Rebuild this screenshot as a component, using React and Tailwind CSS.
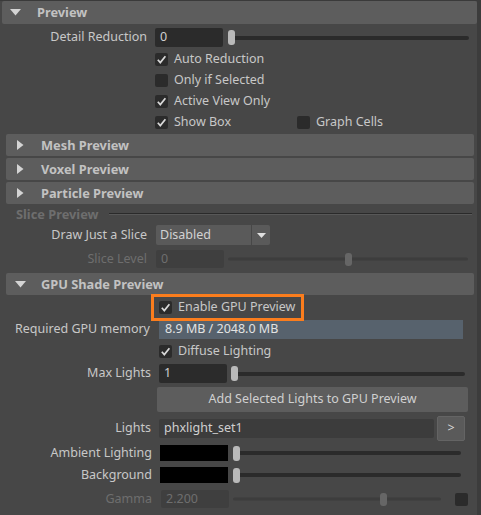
import React from "react";

const LABEL = "text-[#c8c8c8]";
const DIM = "text-[#6e6e6e]";

function Check({ checked }) {
  return (
    <div className="w-[13px] h-[13px] shrink-0 rounded-[2px] bg-[#2b2b2b] flex items-center justify-center">
      {checked && (
        <svg width="13" height="13" viewBox="0 0 13 13">
          <polyline points="2.8,6.8 5.3,9.6 10.4,3.2" fill="none" stroke="#d9d9d9" strokeWidth="1.7" />
        </svg>
      )}
    </div>
  );
}

function CheckRow({ checked, label, extra }) {
  return (
    <div className="h-[21px] flex items-center pl-[155px]">
      <div className="w-[142px] flex items-center gap-[6px]">
        <Check checked={checked} />
        <span className={LABEL}>{label}</span>
      </div>
      {extra}
    </div>
  );
}

function Header({ open, title, outer }) {
  return (
    <div
      className={
        "h-[22px] shrink-0 rounded-[2px] bg-[#5d5d5d] flex items-center " +
        (outer ? "ml-[2px] h-[23px] pl-[8px]" : "ml-[6px] mr-[3px] pl-[9px]")
      }
    >
      <div className="w-[20px] flex items-center">
        {open ? (
          <svg width="11" height="7" viewBox="0 0 11 7">
            <polygon points="0,0 11,0 5.5,6.5" fill="#d4d4d4" />
          </svg>
        ) : (
          <svg width="7" height="10" viewBox="0 0 7 10" className="ml-[2px]">
            <polygon points="0,0 6.5,5 0,10" fill="#d4d4d4" />
          </svg>
        )}
      </div>
      <span className={"font-bold text-[12.8px] text-[#c2c2c2] " + (outer ? "ml-[7px]" : "ml-[6px]")}>{title}</span>
    </div>
  );
}

function Slider({ width, pos, track = "#2b2b2b", handle = "#b9b9b9", h = 15, th = 4 }) {
  return (
    <div className="relative shrink-0" style={{ width, height: h }}>
      <div
        className="absolute left-0 right-0 top-1/2 -translate-y-1/2 rounded-full"
        style={{ height: th, background: track }}
      />
      <div
        className="absolute top-0 w-[7px] rounded-[3px]"
        style={{ left: pos, height: h, background: handle }}
      />
    </div>
  );
}

export default function App() {
  return (
    <div className="w-[481px] h-[515px] overflow-hidden bg-[#3c3c3c] flex text-[12.5px] leading-none font-['Noto_Sans',sans-serif]">
      <div className="w-[477px] shrink-0 bg-[#474747] flex flex-col border-t border-[#3a3a3a]">
        <Header open outer title="Preview" />

        {/* Detail Reduction */}
        <div className="mt-[4px] h-[19px] flex items-center">
          <div className={"w-[147px] text-right whitespace-nowrap " + LABEL}>Detail Reduction</div>
          <div className="ml-[8px] w-[68px] h-[19px] rounded-[2px] bg-[#2b2b2b] flex items-center pl-[5px] text-[#d0d0d0]">0</div>
          <div className="ml-[5px]">
            <Slider width={241} pos={0} />
          </div>
        </div>

        <div className="mt-[2px]">
          <CheckRow checked label="Auto Reduction" />
          <CheckRow label="Only if Selected" />
          <CheckRow checked label="Active View Only" />
          <CheckRow
            checked
            label="Show Box"
            extra={
              <div className="flex items-center gap-[6px]">
                <Check />
                <span className={LABEL}>Graph Cells</span>
              </div>
            }
          />
        </div>

        <div className="mt-[1px] flex flex-col gap-[2px]">
          <Header title="Mesh Preview" />
          <Header title="Voxel Preview" />
          <Header title="Particle Preview" />
        </div>

        {/* Slice Preview */}
        <div className="mt-[1px] h-[18px] flex items-center">
          <span className={"pl-[16px] font-bold text-[12.8px] " + DIM}>Slice Preview</span>
          <div className="ml-[10px] mr-[5px] flex-1 h-[2px] border-t border-[#2a2a2a] bg-[#585858]" />
        </div>

        <div className="mt-[2px] h-[20px] flex items-center">
          <div className={"w-[147px] text-right whitespace-nowrap " + LABEL}>Draw Just a Slice</div>
          <div className="ml-[9px] flex h-[20px]">
            <div className="w-[95px] rounded-l-[2px] bg-[#5a5a5a] flex items-center pl-[4px] text-[#d2d2d2]">Disabled</div>
            <div className="ml-[1px] w-[18px] rounded-r-[2px] bg-[#5a5a5a] flex items-center justify-center">
              <svg width="9" height="5" viewBox="0 0 9 5">
                <polygon points="0,0 9,0 4.5,5" fill="#e0e0e0" />
              </svg>
            </div>
          </div>
        </div>

        <div className="mt-[5px] h-[18px] flex items-center">
          <div className={"w-[147px] text-right " + DIM}>Slice Level</div>
          <div className={"ml-[9px] w-[68px] h-[18px] rounded-[2px] bg-[#3f3f3f] flex items-center pl-[5px] " + DIM}>0</div>
          <div className="ml-[4px]">
            <Slider width={240} pos={117} track="#3d3d3d" handle="#666666" h={13} th={3} />
          </div>
        </div>

        <div className="mt-[5px]">
          <Header open title="GPU Shade Preview" />
        </div>

        {/* GPU shade options */}
        <div className="relative h-[24px] flex items-center pl-[159px]">
          <div className="absolute left-[151px] top-[-1px] w-[153px] h-[27px] border-[3px] border-[#fb7d1d]" />
          <div className="flex items-center gap-[6px]">
            <Check checked />
            <span className={"whitespace-nowrap " + LABEL}>Enable GPU Preview</span>
          </div>
        </div>

        <div className="mt-[1px] h-[19px] flex items-center">
          <div className={"w-[150px] text-right whitespace-nowrap " + LABEL}>Required GPU memory</div>
          <div className="ml-[9px] w-[304px] h-[19px] bg-[#57626d] flex items-center pl-[6px] text-[#e2e2e2]">8.9 MB / 2048.0 MB</div>
        </div>

        <div className="mt-[2px] h-[21px] flex items-center pl-[159px] gap-[6px]">
          <Check checked />
          <span className={LABEL}>Diffuse Lighting</span>
        </div>

        <div className="mt-[2px] h-[19px] flex items-center">
          <div className={"w-[151px] text-right " + LABEL}>Max Lights</div>
          <div className="ml-[8px] w-[68px] h-[19px] rounded-[2px] bg-[#2b2b2b] flex items-center pl-[5px] text-[#d0d0d0]">1</div>
          <div className="ml-[4px]">
            <Slider width={234} pos={0} />
          </div>
        </div>

        <div className="mt-[4px] ml-[157px] w-[311px] h-[25px] rounded-[2px] bg-[#5d5d5d] flex items-center justify-center text-[#d0d0d0] whitespace-nowrap">
          Add Selected Lights to GPU Preview
        </div>

        <div className="mt-[4px] h-[25px] flex items-center">
          <div className={"w-[151px] text-right " + LABEL}>Lights</div>
          <div className="ml-[8px] w-[275px] h-[19px] rounded-[2px] bg-[#3c3c3c] flex items-center pl-[5px] text-[#d0d0d0]">phxlight_set1</div>
          <div className="ml-[3px] w-[28px] h-[25px] rounded-[2px] bg-[#5a5a5a] border border-[#646464] flex items-center justify-center text-[#d8d8d8]">&gt;</div>
        </div>

        <div className="mt-[3px] h-[18px] flex items-center">
          <div className={"w-[152px] text-right whitespace-nowrap " + LABEL}>Ambient Lighting</div>
          <div className="ml-[8px] w-[68px] h-[16px] bg-black" />
          <div className="ml-[5px]">
            <Slider width={228} pos={0} />
          </div>
        </div>

        <div className="mt-[4px] h-[18px] flex items-center">
          <div className={"w-[152px] text-right " + LABEL}>Background</div>
          <div className="ml-[8px] w-[68px] h-[16px] bg-black" />
          <div className="ml-[5px]">
            <Slider width={228} pos={0} />
          </div>
        </div>

        <div className="mt-[5px] h-[20px] flex items-center">
          <div className={"w-[152px] text-right " + DIM}>Gamma</div>
          <div className={"ml-[9px] w-[68px] h-[18px] rounded-[2px] bg-[#3f3f3f] flex items-center pl-[5px] " + DIM}>2.200</div>
          <div className="ml-[4px]">
            <Slider width={208} pos={147} track="#3d3d3d" handle="#666666" h={13} th={3} />
          </div>
          <div className="ml-[14px] w-[13px] h-[13px] rounded-[2px] bg-[#2b2b2b]" />
        </div>
      </div>
      <div className="flex-1 bg-[#3c3c3c]" />
    </div>
  );
}
